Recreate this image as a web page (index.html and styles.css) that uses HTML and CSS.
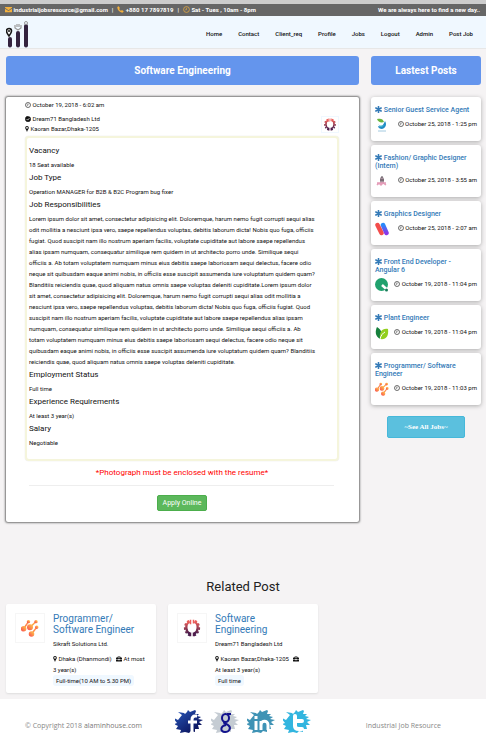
FILE: index.html
```html
<!DOCTYPE html>
<html lang="en">
<head>
<meta charset="utf-8">
<meta name="viewport" content="width=device-width, initial-scale=1">
<title>Industrial Job Resource</title>
<link rel="stylesheet" href="styles.css">
</head>
<body>
<svg class="defs" aria-hidden="true">
  <symbol id="clock" viewBox="0 0 12 12"><circle cx="6" cy="6" r="5" fill="none" stroke="currentColor" stroke-width="1.2"/><path d="M6 3v3.4H3.8" fill="none" stroke="currentColor" stroke-width="1"/></symbol>
  <symbol id="pin" viewBox="0 0 12 12"><path fill-rule="evenodd" d="M6 0a3.6 3.6 0 0 0-3.6 3.6C2.4 5.2 4 7 6 12c2-5 3.600-6.800 3.600-8.400A3.600 3.600 0 0 0 6 0zm0 1.800a1.800 1.800 0 1 1 0 3.600 1.800 1.800 0 0 1 0-3.600z" fill="currentColor"/></symbol>
  <symbol id="case" viewBox="0 0 12 12"><path fill-rule="evenodd" d="M4 1h4a1 1 0 0 1 1 1v1h2a1 1 0 0 1 1 1v2.500H7.200v-.8H4.800v.8H0V4a1 1 0 0 1 1-1h2V2a1 1 0 0 1 1-1zm.2 1.200V3h3.600v-.8zM0 7.300h4.800v1h2.400v-1H12V10a1 1 0 0 1-1 1H1a1 1 0 0 1-1-1z" fill="currentColor"/></symbol>
  <symbol id="check" viewBox="0 0 12 12"><path d="M6 0l1.500 1 1.800-.2.7 1.600 1.600.8-.2 1.800L12 6l-.6 1.500.2 1.700-1.600.8-.7 1.600-1.800-.2L6 12l-1.500-.6-1.800.2L2 10l-1.600-.8.200-1.700L0 6l.6-1.500L.4 2.800 2 2l.7-1.600L4.500.6z" fill="currentColor"/><path d="M3.300 6.200l2 2 3.500-3.800" fill="none" stroke="#fff" stroke-width="1.500"/></symbol>
  <symbol id="star" viewBox="0 0 12 12"><path d="M6 .8v10.400M1.500 3.400l9 5.200M10.500 3.400l-9 5.200" stroke="currentColor" stroke-width="2.700" stroke-linecap="round"/></symbol>
  <symbol id="splat" viewBox="0 0 29 25"><path d="M7 5L3 2l6 1 1 1 2-2 1-2 2 2 5-2 1 1-1 3 4 0-2 2 4 1-3 2 5 1-4 2 3 3-4 0 1 4-4 0 0 3-4-1-2 2-4-1-5 1 1-3-5-1 2-3-4-2 3-1-5-6 6 3z"/></symbol>
  <linearGradient id="redfade" x1="0" y1="0" x2="0" y2="1"><stop offset="0" stop-color="#f0605a"/><stop offset="1" stop-color="#401a4c"/></linearGradient>
  <linearGradient id="orangefade" x1="0" y1="1" x2="1" y2="0"><stop offset="0" stop-color="#f9564f"/><stop offset="1" stop-color="#ffc04a"/></linearGradient>
  <linearGradient id="bluefade" x1="0" y1="0" x2="1" y2="1"><stop offset="0" stop-color="#2a5cc0"/><stop offset="1" stop-color="#06064a"/></linearGradient>
  <linearGradient id="purplefade" x1="0" y1="0" x2="0" y2="1"><stop offset="0" stop-color="#278bfb"/><stop offset="1" stop-color="#8a35e8"/></linearGradient>
  <symbol id="gear" viewBox="0 0 24 24"><g fill="none" stroke="url(#redfade)"><path d="M9 4C5.500 5 4.300 8.500 4.500 12c.2 4 1.500 6 4.500 7.500M15 4c3.500 1 4.700 4.500 4.500 8-.2 4-1.500 6-4.500 7.500" stroke-width="3"/><path d="M8.300 2.500C4 4 2.500 8 2.500 12.200 2.800 17 5 19.500 8.500 21.500M15.700 2.500C20 4 21.500 8 21.500 12.200 21.200 17 19 19.500 15.500 21.500" stroke-width="2.600" stroke-dasharray="3 2.400"/></g><path d="M9 1h2v6H9zM13 1h2v5h-2z" fill="#ea5c59"/><path d="M8 18h3v5H8zM13 18h3v5h-3z" fill="#501d4d"/></symbol>
  <symbol id="nodes" viewBox="0 0 24 24"><g stroke="url(#orangefade)" fill="url(#orangefade)" stroke-width="2"><path d="M3.500 13L10 3.500M12 11l8-7.500M14 20l7-9"/><circle cx="3.500" cy="13" r="2.700"/><circle cx="10" cy="3.500" r="1.300"/><circle cx="12" cy="11" r="3"/><circle cx="20" cy="3.500" r="1.300"/><circle cx="14" cy="20" r="2.700"/><circle cx="21" cy="11" r="1.300"/></g></symbol>
</svg>

<header>
  <div class="topbar">
    <div class="contacts">
      <span><svg class="gold" viewBox="0 0 12 12"><path d="M0 1.500h12v1.600L6 7.200 0 3.100zM0 4.500l6 4 6-4v6H0z" fill="currentColor"/></svg> industrialjobsresource@gmail.com</span>
      <span>|</span>
      <span><svg class="gold" viewBox="0 0 12 12"><path d="M2.800.5L5 3.500 3.800 5c.8 1.600 1.700 2.500 3.200 3.200L8.500 7l3 2.200c-.4 1.500-1.400 2.300-2.700 2.300C5 11 .9 7 .5 3.200.5 2 1.300.9 2.800.5z" fill="currentColor"/></svg> +880 17 7897819</span>
      <span>|</span>
      <span><svg class="gold"><use href="#clock"/></svg> Sat - Tues , 10am - 8pm</span>
    </div>
    <div>We are always here to find a new day..</div>
  </div>
  <nav class="navbar">
    <a href="#" class="brand" aria-label="Industrial Job Resource"><svg viewBox="0 0 24 27"><g fill="#34233f"><rect x="2" y="16" width="4" height="10.500" rx="2"/><rect x="10" y="10" width="4" height="16.500" rx="2"/><rect x="18" y="3" width="4" height="23.500" rx="2"/></g><path d="M3 15C1 12.500.5 11.500.5 10a2.500 2.500 0 0 1 5 0c0 1.500-.5 2.500-2.500 5z" fill="#fff" stroke="#171717" stroke-width="1.600"/><circle cx="3" cy="10" r="1" fill="#171717"/><g fill="none" stroke="#999"><path d="M9 4v3l3 2 3-2V4M11 3v3M13 3v3" stroke-width="1.200"/><circle cx="20" cy="2" r="1.500"/></g></svg></a>
    <div class="links"><a href="#">Home</a><a href="#">Contact</a><a href="#">Client_req</a><a href="#">Profile</a><a href="#">Jobs</a><a href="#">Logout</a><a href="#">Admin</a><a href="#">Post Job</a></div>
  </nav>
</header>

<main>
  <div class="columns">
    <section class="primary">
      <h1 class="banner">Software Engineering</h1>
      <article class="job">
        <div class="meta">
          <div>
            <p class="date"><svg><use href="#clock"/></svg> October 19, 2018 - 6:02 am</p>
            <p><svg><use href="#check"/></svg> Dream71 Bangladesh Ltd</p>
            <p><svg class="narrow" viewBox="2 0 8 12"><use href="#pin" width="12" height="12"/></svg> Kaoran Bazar,Dhaka-1205</p>
          </div>
          <svg class="joblogo"><use href="#gear"/></svg>
        </div>
        <div class="details">
          <h2>Vacancy</h2>
          <p>18 Seat available</p>
          <h2>Job Type</h2>
          <p>Operation MANAGER for B2B &amp; B2C Program bug fixer</p>
          <h2>Job Responsibilities</h2>
          <p>Lorem ipsum dolor sit amet, consectetur adipisicing elit. Doloremque, harum nemo fugit corrupti sequi alias<br>
            odit mollitia a nesciunt ipsa vero, saepe repellendus voluptas, debitis laborum dicta! Nobis quo fuga, officiis<br>
            fugiat. Quod suscipit nam illo nostrum aperiam facilis, voluptate cupiditate aut labore saepe repellendus<br>
            alias ipsam numquam, consequatur similique rem quidem in ut architecto porro unde. Similique sequi<br>
            officiis a. Ab totam voluptatem numquam minus eius debitis saepe laboriosam sequi delectus, facere odio<br>
            neque sit quibusdam eaque animi nobis, in officiis esse suscipit assumenda iure voluptatum quidem quam?<br>
            Blanditiis reiciendis quae, quod aliquam natus omnis saepe voluptas deleniti cupiditate.Lorem ipsum dolor<br>
            sit amet, consectetur adipisicing elit. Doloremque, harum nemo fugit corrupti sequi alias odit mollitia a<br>
            nesciunt ipsa vero, saepe repellendus voluptas, debitis laborum dicta! Nobis quo fuga, officiis fugiat. Quod<br>
            suscipit nam illo nostrum aperiam facilis, voluptate cupiditate aut labore saepe repellendus alias ipsam<br>
            numquam, consequatur similique rem quidem in ut architecto porro unde. Similique sequi officiis a. Ab<br>
            totam voluptatem numquam minus eius debitis saepe laboriosam sequi delectus, facere odio neque sit<br>
            quibusdam eaque animi nobis, in officiis esse suscipit assumenda iure voluptatum quidem quam? Blanditiis<br>
            reiciendis quae, quod aliquam natus omnis saepe voluptas deleniti cupiditate.</p>
          <h2>Employment Status</h2>
          <p>Full time</p>
          <h2>Experience Requirements</h2>
          <p>At least 3 year(s)</p>
          <h2>Salary</h2>
          <p>Negotiable</p>
        </div>
        <p class="notice">*Photograph must be enclosed with the resume*</p>
        <hr>
        <button type="button" class="apply">Apply Online</button>
      </article>
    </section>

    <aside>
      <h2 class="banner">Lastest Posts</h2>
      <div class="posts">
        <article class="post"><a href="#"><svg><use href="#star"/></svg> Senior Guest Service Agent</a>
          <div class="postmeta"><svg class="thumb" viewBox="0 0 14 14"><path d="M2 1c4-1 6 0 7 3-3 1-6 0-7-3z" fill="#69b63d"/><path d="M10 3c2 3 1 7-3 8-2 0-4-1-4-3 3 1 5 0 7-5z" fill="#228cc5"/><path d="M3 5c1 3 3 3 6 2-2 3-5 2-6-2z" fill="#4ac0d0"/><path d="M3 13h8" stroke="#a3cae0"/></svg><span><svg><use href="#clock"/></svg> October 25, 2018 - 1:25 pm</span></div></article>
        <article class="post"><a href="#"><svg><use href="#star"/></svg> Fashion/ Graphic Designer<br>(Intern)</a>
          <div class="postmeta"><svg class="thumb" viewBox="0 0 14 14"><path d="M5 4c1-2 4-1 4 1v4H5z" fill="#a4929c"/><path d="M6 3h2M5 6h4" stroke="#514751"/><path d="M2 9h9M2 11l2-2 2 2 2-2 3 2" fill="none" stroke="#e59db9" stroke-width="1.500"/></svg><span><svg><use href="#clock"/></svg> October 25, 2018 - 3:55 am</span></div></article>
        <article class="post"><a href="#"><svg><use href="#star"/></svg> Graphics Designer</a>
          <div class="postmeta"><svg class="thumb" viewBox="0 0 14 14"><path d="M2.500 3l4 8" stroke="#f34d4b" stroke-width="4.500" stroke-linecap="round"/><path d="M8 3l3.500 8" stroke="url(#purplefade)" stroke-width="4.500" stroke-linecap="round"/></svg><span><svg><use href="#clock"/></svg> October 25, 2018 - 2:07 am</span></div></article>
        <article class="post"><a href="#"><svg><use href="#star"/></svg> Front End Developer -<br>Angular 6</a>
          <div class="postmeta"><svg class="thumb" viewBox="0 0 14 14"><circle cx="6.500" cy="6.500" r="6.500" fill="#20a16d"/><path d="M7 7l6 5.500" stroke="#fff" stroke-width="2.500"/><circle cx="11.500" cy="12" r="1.500" fill="#167c59"/></svg><span><svg><use href="#clock"/></svg> October 19, 2018 - 11:04 pm</span></div></article>
        <article class="post"><a href="#"><svg><use href="#star"/></svg> Plant Engineer</a>
          <div class="postmeta"><svg class="thumb" viewBox="0 0 14 14"><path d="M2 1c5 3 6 8 3 12C0 10 0 5 2 1z" fill="#16803d"/><path d="M13 3c-6-1-9 3-8 10 6 1 9-3 8-10z" fill="#92cf1d"/><path d="M5 13c1-4 3-6 5-7" fill="none" stroke="#fff"/></svg><span><svg><use href="#clock"/></svg> October 19, 2018 - 11:04 pm</span></div></article>
        <article class="post"><a href="#"><svg><use href="#star"/></svg> Programmer/ Software<br>Engineer</a>
          <div class="postmeta"><svg class="thumb"><use href="#nodes"/></svg><span><svg><use href="#clock"/></svg> October 19, 2018 - 11:03 pm</span></div></article>
      </div>
      <button type="button" class="seeall">~See All Jobs~</button>
    </aside>
  </div>

  <section class="related">
    <h2>Related Post</h2>
    <div class="cards">
      <article class="card"><div class="cardlogo"><svg><use href="#nodes"/></svg></div>
        <div><h3><a href="#">Programmer/<br>Software Engineer</a></h3><p class="company">Sikraft Solutions Ltd.</p>
        <p><svg class="narrow" viewBox="2 0 8 12"><use href="#pin" width="12" height="12"/></svg> Dhaka (Dhanmondi) <svg class="case"><use href="#case"/></svg> At most<br>3 year(s)</p><span class="tag">Full-time(10 AM to 5.30 PM)</span></div></article>
      <article class="card"><div class="cardlogo"><svg><use href="#gear"/></svg></div>
        <div><h3><a href="#">Software<br>Engineering</a></h3><p class="company">Dream71 Bangladesh Ltd</p>
        <p><svg class="narrow" viewBox="2 0 8 12"><use href="#pin" width="12" height="12"/></svg> Kaoran Bazar,Dhaka-1205 <svg class="case"><use href="#case"/></svg><br>At least 3 year(s)</p><span class="tag">Full time</span></div></article>
    </div>
  </section>
</main>

<footer>
  <div>© Copyright 2018 <a href="#">alaminhouse.com</a></div>
  <div class="social">
    <a href="#" aria-label="Facebook"><svg viewBox="0 0 29 25"><use href="#splat" fill="url(#bluefade)"/><path d="M22 6h-2q-3 0-3 4v12M13 12h9" fill="none" stroke="#fff" stroke-width="3"/></svg></a>
    <a href="#" aria-label="Google"><svg viewBox="0 0 29 25"><use href="#splat" fill="#c5ccd3"/><g fill="none" stroke="#12128d" stroke-width="2"><ellipse cx="14.500" cy="8" rx="3.500" ry="4"/><path d="M16 4h4M14 12c-3 1 2 2 3 3 4 3 1 7-3 7-5 0-5-6 1-7"/></g></svg></a>
    <a href="#" aria-label="LinkedIn"><svg viewBox="0 0 29 25"><use href="#splat" fill="#3f93b5"/><path d="M9 11v9M9 6v3M14 20V11M14 15c0-5 7-5 7 0v5" fill="none" stroke="#fff" stroke-width="3"/></svg></a>
    <a href="#" aria-label="Twitter"><svg viewBox="0 0 29 25"><use href="#splat" fill="#32b5df"/><path d="M12 6v10q0 3 4 3h3M12 11h7" fill="none" stroke="#fff" stroke-width="4" stroke-linecap="round"/></svg></a>
  </div>
  <div>Industrial Job Resource</div>
</footer>
</body>
</html>
```
FILE: styles.css
```css
* { box-sizing: border-box; }
body { margin: 0; background: #f5f3f4; color: #111; font: 6px/11px Roboto, "Liberation Sans", sans-serif; }
h1, h2, h3, p { margin: 0; font-weight: 400; }
a { color: inherit; text-decoration: none; }
button { font: inherit; cursor: pointer; }
svg { width: 6px; height: 6px; vertical-align: -1px; }
.defs { position: absolute; width: 0; height: 0; }
.narrow { width: 4px; }
.topbar { display: flex; justify-content: space-between; align-items: center; height: 16px; padding: 0 6px 0 5px; border-top: 4px solid #ccc; background: #666; color: #fff; font-weight: 700; line-height: 10px; }
.contacts { display: flex; gap: 4px; }
.gold { color: #f4b13d; width: 7px; height: 7px; }
.navbar { display: flex; align-items: center; justify-content: space-between; height: 33px; padding: 0 13px 0 6px; background: #f0f8ff; border-bottom: 1px solid #e7e7e7; }
.brand svg { display: block; width: 24px; height: 27px; margin-top: 5px; }
.links { display: flex; gap: 16px; padding-top: 3px; font-weight: 500; }
main { padding: 7px 6px 6px; }
.columns { display: grid; grid-template-columns: minmax(0, 1fr) 110px; gap: 12px; margin-right: -1px; }
.banner { height: 29px; line-height: 29px; border-radius: 3px; background: #6495ed; color: #fff; text-align: center; font-size: 10px; font-weight: 700; }
.job { margin-top: 12px; padding: 3px 20px 11px 19px; background: #fff; border-radius: 2px; box-shadow: 0 0 2px 1px #777; text-align: center; }
.meta { display: flex; justify-content: space-between; align-items: flex-end; text-align: left; line-height: 10px; padding-bottom: 2px; }
.meta .date { margin-bottom: 4px; }
.joblogo { width: 18px; height: 17px; margin-bottom: 1px; padding: 1px; border: 1px solid #f0f8ff; }
.details { padding: 7px 5px 9px 2px; border: 2px solid #f5f5dc; border-radius: 4px; box-shadow: 0 0 1px #ccc; text-align: left; }
.details h2 { font-size: 8px; line-height: 12px; margin-bottom: 2px; }
.details p { margin-bottom: 2px; }
.notice { padding-top: 6px; font-size: 8px; line-height: 12px; color: #f00; }
hr { margin: 6px 5px 9px 4px; border: 0; border-top: 1px solid #eee; }
.apply { height: 16px; padding: 0 5px; border: 1px solid #4cae4c; border-radius: 2px; background: #5cb85c; color: #fff; font-size: 7px; line-height: 12px; }
.posts { display: grid; gap: 4px; margin-top: 12px; }
.post { padding: 9px 4px 9px; background: #fff; border-radius: 3px; box-shadow: 0 1px 4px #aaa; }
.post > a { display: block; color: #337ab7; font-size: 7px; font-weight: 500; line-height: 8px; white-space: nowrap; }
.post > a svg { width: 7px; height: 7px; }
.postmeta { display: flex; justify-content: space-between; margin-top: 4px; }
.thumb { width: 14px; height: 14px; }
.seeall { display: block; width: 78px; height: 22px; margin: 11px auto 0; border: 1px solid #46b8da; border-radius: 2px; background: #5bc0de; color: #fff; font: 700 7px/12px "Liberation Serif", serif; padding: 0; }
.related { margin-top: 56px; }
.related h2 { text-align: center; font-size: 13px; line-height: 18px; margin-bottom: 8px; color: #222; }
.cards { display: grid; grid-template-columns: repeat(3, minmax(0, 1fr)); gap: 12px; }
.card { display: flex; gap: 8px; padding: 9px 7px 7px 9px; background: #fff; border-radius: 2px; box-shadow: 0 1px 2px #ddd; white-space: nowrap; }
.cardlogo { flex: none; width: 30px; height: 30px; display: grid; place-items: center; border: 1px solid #f6f6f6; }
.cardlogo svg { width: 18px; height: 18px; }
.card h3 { font-size: 10px; line-height: 11px; color: #337ab7; }
.card .company { margin: 3px 0 4px; }
.case { margin-left: 3px; }
.tag { display: inline-block; padding: 0 3px; border-radius: 3px; background: #f0f8ff; }
footer { display: grid; grid-template-columns: 1fr auto 1fr; align-items: center; padding: 11px 25px 0; background: #fff; color: #888; font: 7px/12px "Open Sans", sans-serif; }
footer > div:first-child, footer > div:last-child { padding-top: 6px; }
footer > div:first-child a { color: #777; }
footer > div:last-child { padding-right: 20px; text-align: right; }
.social { display: flex; gap: 7px; }
.social svg { display: block; width: 29px; height: 25px; }
```
